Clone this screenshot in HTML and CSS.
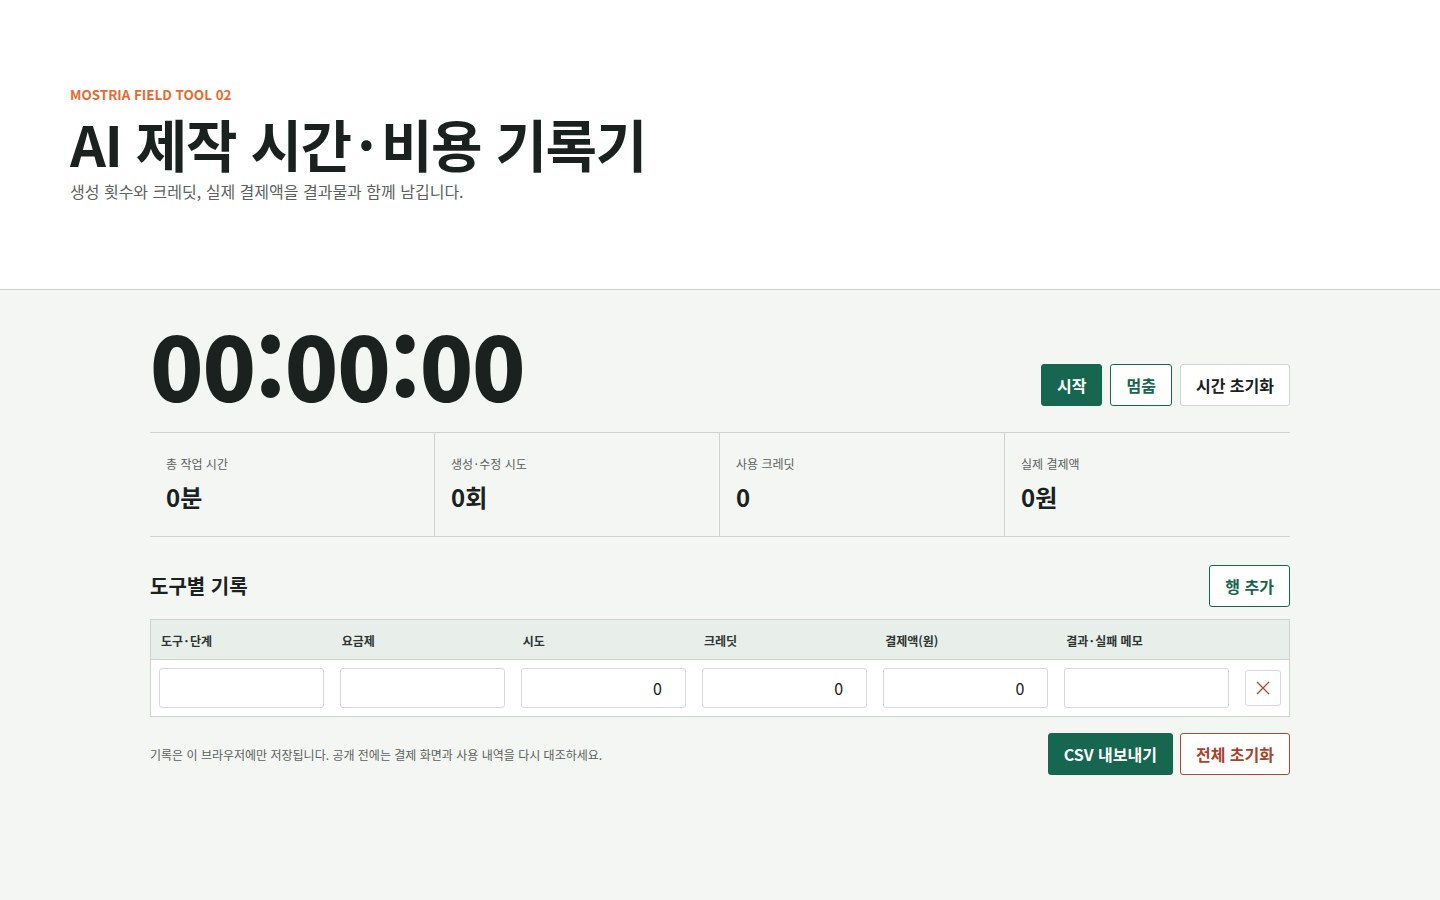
FILE: index.html
```html
<!DOCTYPE html>
<html lang="ko">
<head>
<meta charset="utf-8">
<title>AI 제작 시간·비용 기록기</title>
<link rel="stylesheet" href="styles.css">
</head>
<body>
<header class="hero">
  <p class="eyebrow">MOSTRIA FIELD TOOL 02</p>
  <h1 class="title">AI 제작 시간<span class="dot">·</span>비용 기록기</h1>
  <p class="subtitle">생성 횟수와 크레딧, 실제 결제액을 결과물과 함께 남깁니다.</p>
</header>
<main class="main">
  <section class="timer-row">
    <div class="timer">00:00:00</div>
    <div class="btn-group">
      <button class="btn btn-primary">시작</button>
      <button class="btn btn-outline">멈춤</button>
      <button class="btn btn-plain">시간 초기화</button>
    </div>
  </section>
  <section class="stats">
    <div class="stat"><div class="stat-label">총 작업 시간</div><div class="stat-value">0분</div></div>
    <div class="stat"><div class="stat-label">생성<span class="dot">·</span>수정 시도</div><div class="stat-value">0회</div></div>
    <div class="stat"><div class="stat-label">사용 크레딧</div><div class="stat-value">0</div></div>
    <div class="stat"><div class="stat-label">실제 결제액</div><div class="stat-value">0원</div></div>
  </section>
  <section class="records">
    <div class="records-head">
      <h2 class="records-title">도구별 기록</h2>
      <button class="btn btn-outline">행 추가</button>
    </div>
    <table class="log">
      <colgroup>
        <col class="c"><col class="c"><col class="c"><col class="c"><col class="c"><col class="c"><col class="c-del">
      </colgroup>
      <thead>
        <tr><th>도구<span class="dot">·</span>단계</th><th>요금제</th><th>시도</th><th>크레딧</th><th>결제액(원)</th><th>결과<span class="dot">·</span>실패 메모</th><th></th></tr>
      </thead>
      <tbody>
        <tr>
          <td><input class="field" type="text"></td>
          <td><input class="field" type="text"></td>
          <td><input class="field num" type="text" value="0"></td>
          <td><input class="field num" type="text" value="0"></td>
          <td><input class="field num" type="text" value="0"></td>
          <td><input class="field" type="text"></td>
          <td><button class="del" aria-label="삭제"><svg width="14" height="14" viewBox="0 0 14 14"><path d="M1 1L13 13M13 1L1 13" stroke="#b0472e" stroke-width="1.3" fill="none"/></svg></button></td>
        </tr>
      </tbody>
    </table>
    <div class="foot">
      <p class="note">기록은 이 브라우저에만 저장됩니다. 공개 전에는 결제 화면과 사용 내역을 다시 대조하세요.</p>
      <div class="btn-group foot-btns">
        <button class="btn btn-primary">CSV 내보내기</button>
        <button class="btn btn-danger">전체 초기화</button>
      </div>
    </div>
  </section>
</main>
</body>
</html>
```

FILE: styles.css
```css
* { box-sizing: border-box; }
html, body { margin: 0; padding: 0; }
body {
  font-family: "Noto Sans CJK KR", "Noto Sans", sans-serif;
  color: #1a211e;
  background: #f4f6f3;
  min-height: 900px;
}
p, h1, h2 { margin: 0; }

.dot { margin: 0 0.12em; }

.hero {
  background: #ffffff;
  border-bottom: 1px solid #cdd3d0;
  padding: 84px 70px 86px;
}
.eyebrow {
  font-size: 13.4px;
  line-height: 20px;
  font-weight: 700;
  color: #e8692f;
}
.title {
  margin-top: 7px;
  font-size: 56px;
  line-height: 64px;
  font-weight: 700;
  letter-spacing: -0.025em;
  color: #1a211e;
}
.subtitle {
  margin-top: 4px;
  font-size: 16px;
  line-height: 24px;
  color: #5a615e;
}

.main {
  width: 1140px;
  margin: 0 auto;
  padding-top: 30px;
}
.timer-row {
  display: flex;
  justify-content: space-between;
  align-items: flex-end;
  margin-bottom: 24px;
}
.timer {
  font-size: 88px;
  line-height: 88px;
  font-weight: 800;
  color: #1a211e;
  letter-spacing: -0.013em;
}
.btn-group { display: flex; gap: 8px; margin-bottom: 2px; }
.btn {
  height: 42px;
  padding: 0 15px;
  font-family: inherit;
  font-size: 16px;
  font-weight: 700;
  border-radius: 3px;
  border: 1px solid #cfd5d2;
  background: #ffffff;
  color: #1a211e;
  cursor: pointer;
}
.btn-primary { background: #176650; border-color: #176650; color: #ffffff; }
.btn-outline { border-color: #176650; color: #176650; }
.btn-danger { border-color: #b0472e; color: #a8432a; }

.stats {
  display: grid;
  grid-template-columns: repeat(4, 1fr);
  border-top: 1px solid #cdd3d0;
  border-bottom: 1px solid #cdd3d0;
}
.stat { padding: 22px 16px 23px; }
.stat:not(:last-child) { border-right: 1px solid #cdd3d0; }
.stat-label { font-size: 12px; line-height: 18px; color: #5a615e; }
.stat-value { margin-top: 8px; font-size: 24px; line-height: 32px; font-weight: 700; }

.records { margin-top: 28px; }
.records-head {
  display: flex;
  justify-content: space-between;
  align-items: center;
  margin-bottom: 12px;
}
.records-title { font-size: 20px; line-height: 28px; font-weight: 700; }

.log {
  width: 100%;
  border-collapse: collapse;
  table-layout: fixed;
  background: #ffffff;
  border: 1px solid #cdd3d0;
}
.log col.c { width: 181px; }
.log col.c-del { width: 52px; }
.log th {
  height: 40px;
  background: #e8eeea;
  border-bottom: 1px solid #cdd3d0;
  text-align: left;
  padding: 1px 10px 0;
  font-size: 12px;
  font-weight: 700;
  color: #2e3532;
}
.log td { padding: 8px; height: 56px; }
.field {
  display: block;
  width: 100%;
  height: 40px;
  border: 1px solid #d6dad8;
  border-radius: 3px;
  background: #ffffff;
  font-family: inherit;
  font-size: 16px;
  color: #1a211e;
  padding: 0 10px;
}
.field.num { text-align: right; padding-right: 23px; }
.del {
  display: flex;
  align-items: center;
  justify-content: center;
  width: 36px;
  height: 36px;
  border: 1px solid #d6dad8;
  border-radius: 3px;
  background: #ffffff;
  padding: 0;
  cursor: pointer;
}

.foot {
  display: flex;
  justify-content: space-between;
  align-items: center;
  margin-top: 16px;
}
.foot-btns { margin-bottom: 0; gap: 7px; }
.note { font-size: 12px; line-height: 18px; color: #5a615e; padding-top: 2px; }
```
